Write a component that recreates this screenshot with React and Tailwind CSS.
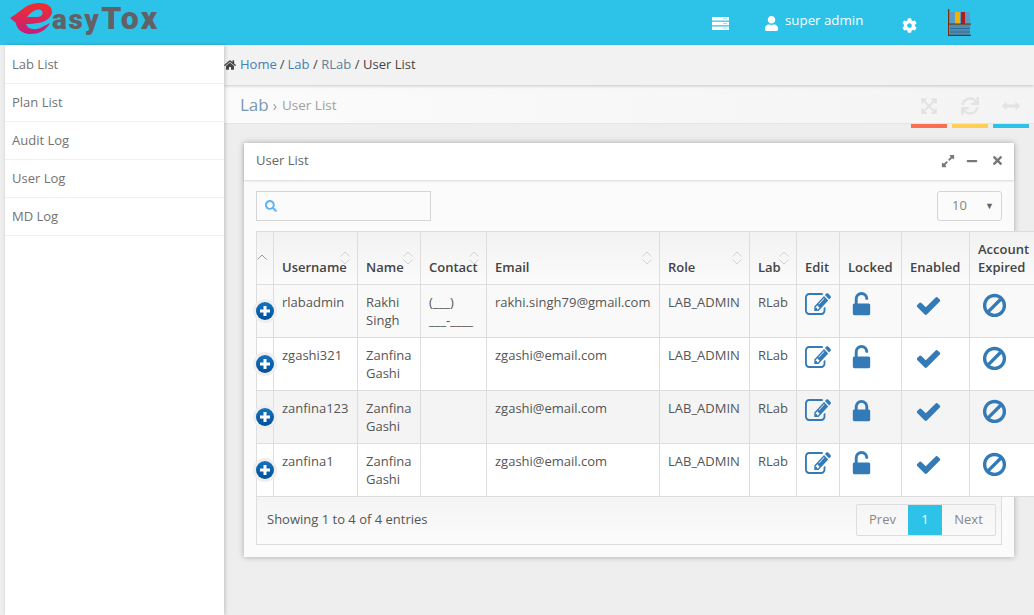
import { FaHome, FaUser, FaCog, FaExpandArrowsAlt, FaSync, FaArrowsAltH, FaExpandAlt, FaMinus, FaTimes, FaSearch } from "react-icons/fa";

const menu = ["Lab List", "Plan List", "Audit Log", "User Log", "MD Log"];

const users = [
  { username: "rlabadmin", name: "Rakhi Singh", contact: "(___) ___-____", email: "rakhi.singh79@gmail.com", locked: false, bg: "bg-[#f9f9f9]" },
  { username: "zgashi321", name: "Zanfina Gashi", contact: "", email: "zgashi@email.com", locked: false, bg: "bg-white" },
  { username: "zanfina123", name: "Zanfina Gashi", contact: "", email: "zgashi@email.com", locked: true, bg: "bg-[#f4f4f4]" },
  { username: "zanfina1", name: "Zanfina Gashi", contact: "", email: "zgashi@email.com", locked: false, bg: "bg-white" },
];

const columns = [
  { label: "Username", sort: true },
  { label: "Name", sort: true },
  { label: "Contact", sort: true },
  { label: "Email", sort: true },
  { label: "Role", sort: true },
  { label: "Lab", sort: true },
  { label: "Edit" },
  { label: "Locked" },
  { label: "Enabled" },
  { label: "Account Expired" },
];

// font-awesome 4 glyphs, the 5 set in react-icons draws these differently
const glyphs = {
  edit: "M888 1184l116-116-152-152-116 116v56h96v96h56zm440-720q-16-16-33 1l-350 350q-17 17-1 33t33-1l350-350q17-17 1-33zm80 594v190q0 119-84.5 203.5t-203.5 84.5h-832q-119 0-203.5-84.5t-84.5-203.5v-832q0-119 84.5-203.5t203.5-84.5h832q63 0 117 25 15 7 18 23 3 17-9 29l-49 49q-14 14-32 8-23-6-45-6h-832q-66 0-113 47t-47 113v832q0 66 47 113t113 47h832q66 0 113-47t47-113v-126q0-13 9-22l64-64q15-15 35-7t20 29zm-96-738l288 288-672 672h-288v-288zm444 132l-92 92-288-288 92-92q28-28 68-28t68 28l152 152q28 28 28 68t-28 68z",
  unlock: "M1376 768q40 0 68 28t28 68v576q0 40-28 68t-68 28h-960q-40 0-68-28t-28-68v-576q0-40 28-68t68-28h32v-320q0-185 131.5-316.5t316.5-131.5 316.5 131.5 131.5 316.5q0 26-19 45t-45 19h-64q-26 0-45-19t-19-45q0-106-75-181t-181-75-181 75-75 181v320h736z",
  lock: "M640 768h512v-192q0-106-75-181t-181-75-181 75-75 181v192zm832 96v576q0 40-28 68t-68 28h-960q-40 0-68-28t-28-68v-576q0-40 28-68t68-28h32v-192q0-184 132-316t316-132 316 132 132 316v192h32q40 0 68 28t28 68z",
  check: "M1671 566q0 40-28 68l-724 724-136 136q-28 28-68 28t-68-28l-136-136-362-362q-28-28-28-68t28-68l136-136q28-28 68-28t68 28l294 295 656-657q28-28 68-28t68 28l136 136q28 28 28 68z",
  ban: "M1440 893q0-161-87-295l-754 753q137 89 297 89 111 0 211.5-43.5t173.5-116.5 116-174.5 43-212.5zm-999 299l755-754q-135-91-300-91-148 0-273 73t-198 199-73 274q0 162 89 299zm1223-299q0 157-61 300t-163.5 246-245 164-298.5 61-298.5-61-245-164-163.5-246-61-300 61-299.5 163.5-245.5 245-164 298.5-61 298.5 61 245 164 163.5 245.5 61 299.5z",
};

function Glyph({ name, className, stretch }) {
  return (
    <svg viewBox="0 0 1792 1792" fill="#337ab7" className={className} preserveAspectRatio={stretch ? "none" : undefined}>
      <path d={glyphs[name]} />
    </svg>
  );
}

function SortArrows() {
  return (
    <svg viewBox="0 0 10 14" className="absolute right-[7px] top-[19px] h-[14px] w-[10px]" fill="none" stroke="#d2d2d2" strokeWidth="1">
      <path d="M0.5 5.5 5 1l4.5 4.5M0.5 8.5 5 13l4.5-4.5" />
    </svg>
  );
}

function Logo() {
  return (
    <div className="flex h-[45px] w-[150px] items-start">
      <svg viewBox="0 0 44 34" className="mt-[2px] h-[34px] w-[44px] shrink-0">
        <defs>
          <linearGradient id="logoGrad" x1="0" y1="0" x2="0" y2="1">
            <stop offset="0" stopColor="#f2302c" />
            <stop offset="1" stopColor="#c41c7e" />
          </linearGradient>
        </defs>
        <path
          d="M0 16 C6 12 10 9 14 6 C20 1 30 0 36 2 C42 4 44 10 40 15 C36 20 28 22 16 22 C18 28 26 29 34 24 L40 21 C36 29 28 32 20 32 C12 32 6 26 6 21 Z M17 15 L27 15 C33 15 34 10 31 8 C27 6 21 10 17 15 Z"
          fill="url(#logoGrad)"
          fillRule="evenodd"
        />
      </svg>
      <div className="mt-[1px] flex items-baseline font-['Roboto',sans-serif] font-black text-[#616166]">
        <span className="-ml-[2px] text-[28px] leading-[34px] tracking-[1.5px]">asy</span>
        <span className="ml-[1px] text-[32px] leading-[34px] tracking-[2.5px]">Tox</span>
      </div>
    </div>
  );
}

function ServerIcon() {
  return (
    <svg viewBox="0 0 17 13" className="h-[13px] w-[17px]" fill="#fff">
      <path d="M0 0h17v3.6H0zM0 4.7h17v3.6H0zM0 9.4h17V13H0z" />
      <path d="M11 1.2h4v1h-4zM11 5.9h4v1h-4zM11 10.6h4v1h-4z" fill="#9fdff2" />
    </svg>
  );
}

function Books() {
  return (
    <svg viewBox="0 0 24 27" className="h-[27px] w-[24px]">
      <rect x="3" y="3" width="20" height="12" fill="#5b9bc4" />
      <rect x="8" y="3" width="5" height="12" fill="#f0b400" />
      <rect x="14" y="3" width="4" height="12" fill="#b01c1c" />
      <rect x="3" y="16" width="20" height="10" fill="#4d8db5" />
      <rect x="3" y="19" width="20" height="1" fill="#2f6c92" />
      <rect x="3" y="22.5" width="20" height="1" fill="#2f6c92" />
      <rect x="1" y="0" width="1.3" height="27" fill="#7a3010" />
      <rect x="1" y="14.5" width="23" height="1.2" fill="#7a3010" />
      <rect x="1" y="25.8" width="23" height="1.2" fill="#7a3010" />
    </svg>
  );
}

function PlusBadge() {
  return (
    <span className="absolute left-[-1px] top-[17px] flex h-[18px] w-[18px] items-center justify-center rounded-full bg-[linear-gradient(#1275bd,#024f9c)] shadow-[0_0_0_3px_#eeeeee]">
      <svg viewBox="0 0 12 12" className="h-[12px] w-[12px]">
        <path d="M4.5 1h3v3.5H11v3H7.5V11h-3V7.5H1v-3h3.5z" fill="#fff" />
      </svg>
    </span>
  );
}

export default function App() {
  return (
    <div className="flex h-[615px] w-[1034px] flex-col overflow-hidden bg-[#eeeeee] font-['Open_Sans',sans-serif] text-[13px] text-[#555]">
      {/* navbar */}
      <header className="flex h-[45px] shrink-0 items-center bg-[#2dc3e8] pl-[10px]">
        <Logo />
        <div className="ml-[552px] mt-[2px]"><ServerIcon /></div>
        <FaUser className="ml-[35px] mt-px text-[15px] text-white" />
        <span className="ml-[6px] mb-[3px] text-[13.3px] text-white">super admin</span>
        <FaCog className="ml-[39px] mt-[5px] text-[15px] text-white" />
        <div className="ml-[30px]"><Books /></div>
      </header>

      <div className="flex min-h-0 flex-1">
        {/* sidebar */}
        <aside className="relative z-10 ml-[5px] w-[219px] shrink-0 bg-white pt-px shadow-[1px_0_4px_rgba(0,0,0,0.2)]">
          {menu.map((item) => (
            <div key={item} className="flex h-[38px] items-center border-b border-[#f0f0f0] pl-[7px] text-[#737373]">
              {item}
            </div>
          ))}
        </aside>

        <main className="min-w-0 flex-1">
          {/* breadcrumb */}
          <div className="relative z-[1] flex h-[40px] items-center bg-[#f2f2f2] text-[#444] shadow-[0_1px_3px_rgba(0,0,0,0.2)]">
            <FaHome className="mr-[4px] text-[12px] text-[#444]" />
            <span className="text-[#427fb4]">Home</span>
            <span className="mx-[3px]">/</span>
            <span className="text-[#427fb4]">Lab</span>
            <span className="mx-[3.5px]">/</span>
            <span className="text-[#5f7f96]">RLab</span>
            <span className="mx-[3.5px]">/</span>
            <span>User List</span>
          </div>

          {/* page header */}
          <div className="flex h-[39px] items-start border-b border-[#e5e5e5] bg-[linear-gradient(90deg,#fbfbfb,#f4f4f4)] pl-[16px]">
            <span className="mt-[8px] text-[17px] leading-[23px] text-[#7b98b0]">Lab</span>
            <span className="ml-[4px] mt-[9px] text-[14px] leading-[23px] text-[#999]">›</span>
            <span className="ml-[5px] mt-[9px] text-[13.5px] leading-[23px] text-[#a0a0a0]">User List</span>
            <div className="ml-auto mr-[5px] flex items-start">
              {[
                [FaExpandArrowsAlt, "border-[#fb6e52]"],
                [FaSync, "border-[#ffce55]"],
                [FaArrowsAltH, "border-[#2dc3e8]"],
              ].map(([Icon, border], i) => (
                <div key={i} className={`ml-[5px] flex h-[43px] w-[36px] items-center justify-center border-b-[4px] pt-[3px] ${border} text-[18px] text-[#e3e3e3]`}>
                  <Icon />
                </div>
              ))}
            </div>
          </div>

          {/* widget */}
          <section className="ml-[20px] mt-[19px] h-[414px] w-[770px] bg-[#fbfbfb] shadow-[0_0_6px_rgba(0,0,0,0.3)]">
            <div className="flex h-[37px] items-center bg-white pb-[2px] pl-[12px] pr-[10px] text-[#666] shadow-[0_1px_2px_rgba(0,0,0,0.15)]">
              <span>User List</span>
              <FaExpandAlt className="ml-auto text-[14px] text-[#777]" />
              <FaMinus className="ml-[11px] text-[12px] text-[#777]" />
              <FaTimes className="ml-[13px] text-[13px] text-[#777]" />
            </div>

            <div className="flex items-start justify-between px-[12px] pt-[11px]">
              <div className="flex h-[30px] w-[175px] items-center border border-[#d5d5d5] bg-[#fbfbfb] pl-[8px]">
                <FaSearch className="text-[12px] text-[#5db2ff]" />
              </div>
              <div className="flex h-[30px] w-[65px] items-center justify-between rounded-[3px] border border-[#d5d5d5] pl-[14px] pr-[7px] text-[#858585]">
                <span>10</span>
                <span className="text-[9px] text-[#666]">▼</span>
              </div>
            </div>

            <table className="mt-[10px] ml-[12px] w-[790px] table-fixed border-collapse border border-[#dddddd] text-[13px] leading-[18px]">
              <colgroup>
                <col className="w-[17px]" />
                <col className="w-[84px]" />
                <col className="w-[63px]" />
                <col className="w-[66px]" />
                <col className="w-[173px]" />
                <col className="w-[90px]" />
                <col className="w-[47px]" />
                <col className="w-[43px]" />
                <col className="w-[62px]" />
                <col className="w-[68px]" />
                <col className="w-[77px]" />
              </colgroup>
              <thead>
                <tr className="h-[53px] bg-[linear-gradient(#f2f2f2,#fbfbfb)]">
                  <th className="relative border border-[#dddddd] p-0">
                    <svg viewBox="0 0 10 6" className="absolute left-0 top-[22px] h-[6px] w-[10px]" fill="none" stroke="#888" strokeWidth="0.8">
                      <path d="M0.5 5.5 5 1l4.5 4.5" />
                    </svg>
                  </th>
                  {columns.map((c) => (
                    <th key={c.label} className="relative border border-[#dddddd] px-[8px] pb-[8px] align-bottom text-left font-semibold text-[#444]">
                      {c.label}
                      {c.sort && <SortArrows />}
                    </th>
                  ))}
                </tr>
              </thead>
              <tbody>
                {users.map((u) => (
                  <tr key={u.username} className={`h-[53px] ${u.bg}`}>
                    <td className="relative border border-[#dddddd] p-0"><PlusBadge /></td>
                    <td className="border border-[#dddddd] p-[8px] align-top">{u.username}</td>
                    <td className="border border-[#dddddd] p-[8px] align-top">{u.name}</td>
                    <td className="border border-[#dddddd] p-[8px] align-top">{u.contact}</td>
                    <td className="border border-[#dddddd] p-[8px] align-top">{u.email}</td>
                    <td className="border border-[#dddddd] p-[8px] align-top">LAB_ADMIN</td>
                    <td className="border border-[#dddddd] p-[8px] align-top">RLab</td>
                    <td className="border border-[#dddddd] pl-[8px] pt-[6px] align-top"><Glyph name="edit" stretch className="h-[28px] w-[26px]" /></td>
                    <td className="border border-[#dddddd] pl-[8px] pt-[7px] align-top">
                      <Glyph name={u.locked ? "lock" : "unlock"} className="h-[27px] w-[27px]" />
                    </td>
                    <td className="border border-[#dddddd] pl-[13px] pt-[7px] align-top"><Glyph name="check" className="h-[27px] w-[27px]" /></td>
                    <td className="border border-[#dddddd] pl-[11px] pt-[7px] align-top"><Glyph name="ban" className="h-[27px] w-[27px]" /></td>
                  </tr>
                ))}
              </tbody>
            </table>

            {/* table footer */}
            <div className="ml-[12px] flex h-[48px] w-[746px] items-center justify-between border border-t-0 border-[#dddddd] bg-[linear-gradient(#f4f4f4,#fbfbfb)] pb-[2px] pl-[10px] pr-[5px]">
              <span>Showing 1 to 4 of 4 entries</span>
              <div className="flex h-[32px] items-stretch rounded-[2px] border border-[#dddddd] text-[13px] text-[#888]">
                <span className="flex w-[51px] items-center justify-center">Prev</span>
                <span className="flex w-[34px] items-center justify-center bg-[#2dc3e8] text-white">1</span>
                <span className="flex w-[53px] items-center justify-center">Next</span>
              </div>
            </div>
          </section>
        </main>
      </div>
    </div>
  );
}
